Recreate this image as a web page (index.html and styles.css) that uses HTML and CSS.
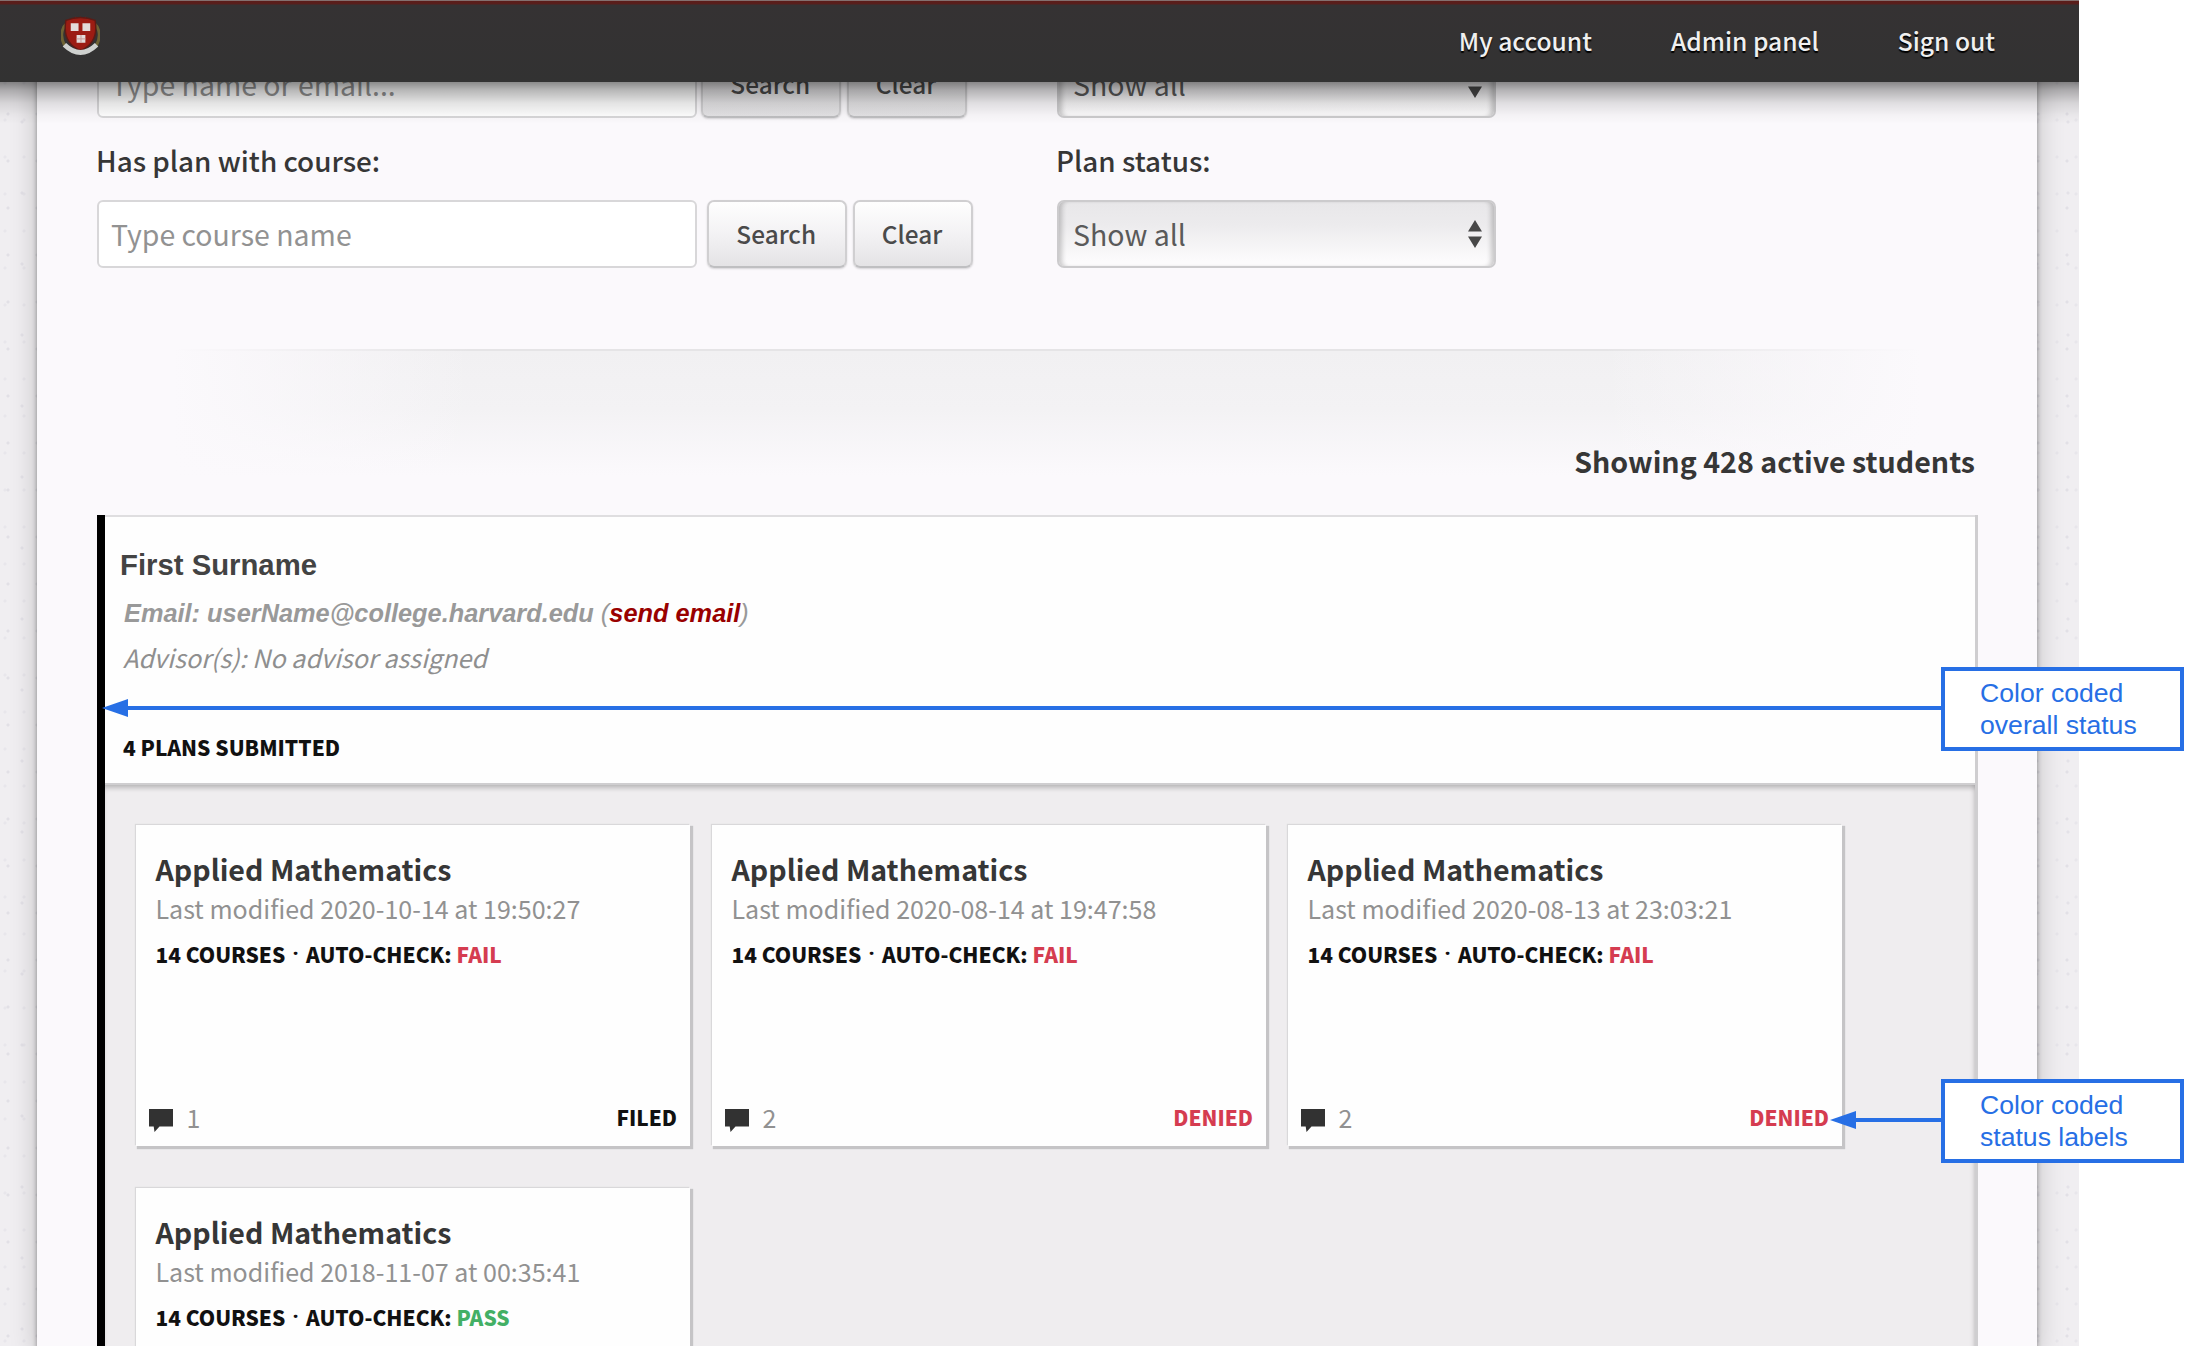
FILE: index.html
```html
<!DOCTYPE html>
<html lang="en">
<head>
<meta charset="utf-8">
<title>Active students</title>
<link rel="stylesheet" href="styles.css">
</head>
<body>
<svg class="sprite" aria-hidden="true">
  <symbol id="comment" viewBox="0 0 24 23"><path d="M0 0h24v17.500H10.500L5.500 23l-.8-5.500H0z" fill="#323232"/></symbol>
</svg>
<div class="app">
  <header class="topbar">
    <svg class="crest" viewBox="0 0 40 42" aria-label="Crest">
      <path d="M6 9C0 14-1 24 4 32M34 9c6 5 7 15 2 23" fill="none" stroke="#6d6234" stroke-width="3"/>
      <path d="M13 6l2-4 2 3 3-3 3 3 2-3 2 4z" fill="#8c1f18"/>
      <path d="M5 6Q20 0 35 6q4 23-15 31Q1 29 5 6z" fill="#9c1c13" stroke="#5f1a14" stroke-width="1.500"/>
      <path d="M10 9h8v8h-8zM22 9h8v8h-8zM16 21h9v8h-9z" fill="#e3dcda"/>
      <path d="M20.500 21v8M16 25h9" stroke="#c99a96"/>
      <path d="M3.500 31Q20 47 36.500 31" fill="none" stroke="#cfd1cf" stroke-width="5"/>
    </svg>
    <nav class="nav"><a>My account</a><a>Admin panel</a><a>Sign out</a></nav>
  </header>
  <main class="sheet">
    <section class="filters">
      <div class="search tight"><div class="input">Type name or email...</div><button>Search</button><button class="clear">Clear</button></div>
      <div class="select"><span>Show all</span><svg class="arrows" viewBox="0 0 14 28"><path d="M7 0l7 11.500H0zM0 16.500h14L7 28z"/></svg></div>
      <label class="label">Has plan with course:</label>
      <label class="label">Plan status:</label>
      <div class="search"><div class="input">Type course name</div><button>Search</button><button class="clear">Clear</button></div>
      <div class="select"><span>Show all</span><svg class="arrows" viewBox="0 0 14 28"><path d="M7 0l7 11.500H0zM0 16.500h14L7 28z"/></svg></div>
    </section>
    <div class="summary">Showing 428 active students</div>
    <article class="student">
      <div class="student-head">
        <h2 class="name">First Surname</h2>
        <p class="email">Email: userName@college.harvard.edu <i>(</i><a>send email</a><i>)</i></p>
        <p class="advisor">Advisor(s): No advisor assigned</p>
        <p class="count">4 PLANS SUBMITTED</p>
      </div>
      <div class="plans">
        <section class="plan">
          <h3>Applied Mathematics</h3>
          <p class="modified">Last modified 2020-10-14 at 19:50:27</p>
          <p class="check">14 COURSES <span class="dot">·</span> AUTO-CHECK: <span class="bad">FAIL</span></p>
          <footer><svg class="comment"><use href="#comment"/></svg><span>1</span><strong>FILED</strong></footer>
        </section>
        <section class="plan">
          <h3>Applied Mathematics</h3>
          <p class="modified">Last modified 2020-08-14 at 19:47:58</p>
          <p class="check">14 COURSES <span class="dot">·</span> AUTO-CHECK: <span class="bad">FAIL</span></p>
          <footer><svg class="comment"><use href="#comment"/></svg><span>2</span><strong class="bad">DENIED</strong></footer>
        </section>
        <section class="plan">
          <h3>Applied Mathematics</h3>
          <p class="modified">Last modified 2020-08-13 at 23:03:21</p>
          <p class="check">14 COURSES <span class="dot">·</span> AUTO-CHECK: <span class="bad">FAIL</span></p>
          <footer><svg class="comment"><use href="#comment"/></svg><span>2</span><strong class="bad">DENIED</strong></footer>
        </section>
        <section class="plan">
          <h3>Applied Mathematics</h3>
          <p class="modified">Last modified 2018-11-07 at 00:35:41</p>
          <p class="check">14 COURSES <span class="dot">·</span> AUTO-CHECK: <span class="good">PASS</span></p>
        </section>
      </div>
    </article>
  </main>
</div>
<svg class="pointer overall" viewBox="0 0 1842 20"><path d="M24 10h1818" stroke="#276fe5" stroke-width="4"/><path d="M0 10L26 1v18z" fill="#276fe5"/></svg>
<aside class="note overall-note">Color coded<br>overall status</aside>
<svg class="pointer labels" viewBox="0 0 114 20"><path d="M24 10h90" stroke="#276fe5" stroke-width="4"/><path d="M0 10L26 1v18z" fill="#276fe5"/></svg>
<aside class="note labels-note">Color coded<br>status labels</aside>
</body>
</html>
```
FILE: styles.css
```css
* { box-sizing: border-box; }
body {
  margin: 0;
  width: 2198px;
  height: 1346px;
  overflow: hidden;
  position: relative;
  background: #fff;
  color: #363636;
  font-family: "Noto Sans CJK SC", "Noto Sans", sans-serif;
}
h2, h3, p { margin: 0; }
.sprite { position: absolute; width: 0; height: 0; }

.app {
  position: relative;
  width: 2079px;
  height: 1346px;
  overflow: hidden;
  background-color: #f0eef1;
  background-image:
    radial-gradient(circle at 8px 20px, #e2e0e6 1px, transparent 2px),
    radial-gradient(circle at 22px 51px, #e4e2e8 1px, transparent 2px),
    radial-gradient(circle at 5px 9px, #e8e6eb 1px, transparent 2px);
  background-size: 29px 47px, 31px 71px, 19px 37px;
}

.topbar {
  position: absolute;
  z-index: 2;
  inset: 0 0 auto 0;
  height: 82px;
  padding: 0 84px 0 61px;
  display: flex;
  align-items: flex-start;
  justify-content: space-between;
  background: linear-gradient(#84706f 1px, #5c1c19 1px, #571f1d 4px, #353233 5px, #323232 100%);
}
.topbar::after {
  content: "";
  position: absolute;
  inset: 100% 0 auto 0;
  height: 42px;
  background: linear-gradient(rgba(0, 0, 0, .46), rgba(0, 0, 0, .28) 20%, rgba(0, 0, 0, .11) 50%, rgba(0, 0, 0, .03) 78%, transparent);
}
.crest { width: 39px; height: 42px; margin-top: 14px; }
.nav { display: flex; gap: 79px; }
.nav a {
  line-height: 80px;
  font-size: 24.600px;
  font-weight: 500;
  color: #f0f0f0;
  text-shadow: 0 2px 1px #000;
}

.sheet {
  margin: 0 42px 0 37px;
  padding: 50px 59px 0 60px;
  min-height: 1346px;
  background: #fbf9fc;
  box-shadow: 0 0 5px rgba(0, 0, 0, .36), 0 0 26px rgba(0, 0, 0, .2);
}

.filters {
  display: grid;
  grid-template-columns: 960px 439px;
  grid-template-rows: 68px 82px 68px;
}
.label { padding-top: 1px; margin-left: -1px; line-height: 83px; height: 82px; font-size: 27.850px; font-weight: 500; }
.search { display: flex; }
.input {
  width: 600px;
  margin-right: 10px;
  padding-left: 12px;
  border: 2px solid #d8d7d9;
  border-radius: 6px;
  background: #fff;
  color: #929292;
  font-size: 28.450px;
  line-height: 64px;
}
.tight .input { margin-right: 4px; }
button {
  width: 139.500px;
  height: 68px;
  margin: 0 6px 0 0;
  padding: 0 1px 1px 0;
  border: 2px solid #d0cfd1;
  border-bottom-color: #bfbfc1;
  border-radius: 7px;
  background: linear-gradient(#fefefe, #f3f2f4 50%, #e4e3e5);
  box-shadow: 0 1px 2px rgba(0, 0, 0, .15);
  color: #4a4a4a;
  font: 500 24.400px/60px "Noto Sans CJK SC", "Noto Sans", sans-serif;
}
.tight button { background: linear-gradient(#efeef0, #e4e3e5); }
.clear { width: 120px; }
.select {
  display: flex;
  align-items: center;
  justify-content: space-between;
  padding: 0 12px 0 14px;
  border: 2px solid #cccbcd;
  border-radius: 7px;
  background: linear-gradient(#e8e7e9, #ecebed 35%, #fcfbfc 92%);
  box-shadow: inset 6px 0 5px -3px rgba(0, 0, 0, .2), inset -6px 0 5px -3px rgba(0, 0, 0, .2);
  font-size: 28.500px;
  line-height: 64px;
  color: #5a5a5a;
}
.arrows { width: 14px; height: 28px; fill: #484848; }

.summary {
  height: 166px;
  margin-top: 81px;
  padding: 88px 3px 0 0;
  border-top: 2px solid transparent;
  text-align: right;
  line-height: 44px;
  font-size: 28.600px;
  font-weight: 700;
  background:
    linear-gradient(90deg, #fbf9fc 4%, rgba(251, 249, 252, 0) 20%, rgba(251, 249, 252, 0) 80%, #fbf9fc 97%) border-box,
    linear-gradient(#e5e4e6 2px, #f1f0f2 2px, #f3f2f4 60px, #fbf9fc 126px) border-box;
}

.student {
  border-left: 8px solid #000;
  border-right: 3px solid #cfced0;
  height: 840px;
}
.student-head {
  height: 270px;
  padding: 23px 0 0 19px;
  border-top: 2px solid #dfdee0;
  border-bottom: 2px solid #cfced0;
  background: #fefefe;
}
.name {
  margin-left: -4px;
  font: 700 29.300px/50px "Liberation Sans", Arial, sans-serif;
  color: #434343;
}
.email { font: italic 700 25.350px/46px "Liberation Sans", Arial, sans-serif; color: #999; }
.email i { font-weight: 400; }
.email a { color: #990000; }
.advisor { margin: -1px 0 0 -1px; font-size: 25.150px; line-height: 44px; font-style: italic; color: #8f8f8f; }
.count { margin: 44px 0 0 -1px; font-size: 20.950px; line-height: 48px; font-weight: 900; color: #111; }

.plans {
  height: 570px;
  padding: 40px 0 0 31px;
  display: grid;
  grid-template-columns: repeat(3, 554px);
  grid-auto-rows: 321px;
  gap: 42px 22px;
  background: #efedef;
  box-shadow: inset 0 5px 5px -2px rgba(0, 0, 0, .22), inset -4px 0 5px -3px rgba(0, 0, 0, .15);
}
.plan {
  display: flex;
  flex-direction: column;
  padding: 26px 13px 9px 19.500px;
  background: #fefefe;
  box-shadow: 2px 2px 1px 1px #c5c4c6, -1px -1px 1px #d9d8da;
}
.plan h3 { font-size: 28.600px; line-height: 36px; font-weight: 700; }
.modified { font-size: 25.040px; line-height: 43px; color: #919191; }
.check { font-size: 20.880px; line-height: 48px; font-weight: 900; color: #111; }
.dot {
  display: inline-block;
  width: 11px;
  line-height: 20px;
  font-family: "Noto Sans", sans-serif;
  font-size: 18px;
  text-align: center;
  vertical-align: 3px;
}
.plan footer {
  display: flex;
  align-items: center;
  margin: auto 0 0 -7px;
  line-height: 40px;
  font-size: 25px;
  color: #919191;
}
.comment { width: 24px; height: 23px; margin: 7px 14px 0 0; }
.plan strong { margin-left: auto; font-size: 20.800px; font-weight: 900; color: #111; }
.plan .bad { color: #d53c50; }
.good { color: #43b065; }

/* Annotations over the page */
.pointer { position: absolute; z-index: 3; height: 20px; }
.overall { left: 102px; top: 698px; width: 1842px; }
.labels { left: 1830px; top: 1110px; width: 114px; }
.note {
  position: absolute;
  z-index: 3;
  left: 1941px;
  width: 243px;
  height: 84px;
  padding: 6px 0 0 35px;
  border: 4px solid #276fe5;
  background: #fff;
  color: #276fe5;
  font: 26.600px/32px "Liberation Sans", Arial, sans-serif;
}
.overall-note { top: 667px; }
.labels-note { top: 1079px; }
```
